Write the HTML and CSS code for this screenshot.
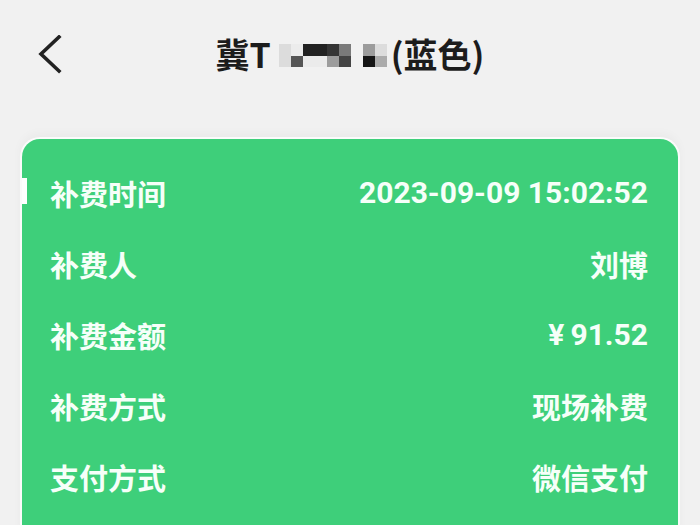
FILE: index.html
```html
<!DOCTYPE html>
<html lang="zh-CN">
<head>
<meta charset="utf-8">
<link rel="stylesheet" href="styles.css">
</head>
<body>
<header class="topbar">
  <span class="back">
    <svg width="24" height="40" viewBox="0 0 24 40"><path d="M21 2 L3 19 L21 36" fill="none" stroke="#222" stroke-width="3.6" stroke-linecap="square" stroke-linejoin="miter"/></svg>
  </span>
  <h1 class="title">冀T<span class="mosaic"><i class="m-ddd"></i><i class="m-f0"></i><i class="m-222"></i><i class="m-222"></i><i class="m-333"></i><i class="m-777"></i><i class="m-f1"></i><i class="m-999"></i><i class="m-ddd"></i><i class="m-ddd"></i><i class="m-555"></i><i class="m-eee"></i><i class="m-eee"></i><i class="m-999"></i><i class="m-444"></i><i class="m-f1"></i><i class="m-111"></i><i class="m-aaa"></i></span>(蓝色)</h1>
</header>
<main class="card">
  <span class="marker"></span>
  <div class="row"><span class="label">补费时间</span><span class="value num">2023-09-09 15:02:52</span></div>
  <div class="row"><span class="label">补费人</span><span class="value">刘博</span></div>
  <div class="row"><span class="label">补费金额</span><span class="value num"><span class="yen">¥</span>91.52</span></div>
  <div class="row"><span class="label">补费方式</span><span class="value">现场补费</span></div>
  <div class="row"><span class="label">支付方式</span><span class="value">微信支付</span></div>
  <div class="row"><span class="label">&nbsp;</span><span class="value"></span></div>
</main>
</body>
</html>
```
FILE: styles.css
```css
* { box-sizing: border-box; }
html, body { margin: 0; padding: 0; }
body {
  background: #f1f1f1;
  font-family: "Noto Sans CJK SC", "Noto Sans", sans-serif;
  width: 700px;
  height: 525px;
  overflow: hidden;
}
.topbar {
  position: relative;
  height: 137px;
  display: flex;
  justify-content: center;
  padding-top: 32px;
}
.back {
  position: absolute;
  left: 38px;
  top: 35px;
  width: 24px;
  height: 40px;
}
.back svg { display: block; }
.title {
  margin: 0;
  font-size: 34px;
  font-weight: 700;
  color: #1c1c1c;
  line-height: 44px;
  height: 44px;
  display: flex;
  align-items: center;
  letter-spacing: 0;
}
.title .mosaic {
  display: inline-grid;
  grid-template-columns: repeat(9, 12px);
  grid-template-rows: 12px 11px;
  margin: 2px 4px 0 8px;
}
.mosaic i { display: block; }
.m-ddd { background: #dcdcdc; }
.m-f0 { background: #ececec; }
.m-f1 { background: #f1f1f1; }
.m-eee { background: #ebebeb; }
.m-222 { background: #222; }
.m-333 { background: #353535; }
.m-777 { background: #7a7a7a; }
.m-999 { background: #9c9c9c; }
.m-aaa { background: #ababab; }
.m-555 { background: #555; }
.m-444 { background: #444; }
.m-111 { background: #151515; }
.card {
  position: relative;
  margin: 0 20px;
  height: 400px;
  background: #3ecf7a;
  border: 2px solid #fbfbfb;
  border-bottom: 0;
  border-radius: 20px 20px 0 0;
  padding: 18px 30px 0 28px;
  box-shadow: 0 -4px 10px rgba(0,0,0,0.03);
}
.marker {
  position: absolute;
  left: 0;
  top: 39px;
  width: 5px;
  height: 26px;
  background: #fff;
}
.row {
  height: 71px;
  display: flex;
  justify-content: space-between;
  align-items: center;
  color: #f6fff9;
  font-size: 29px;
  font-weight: 700;
}
.value.num {
  font-family: Roboto, "Noto Sans", sans-serif;
  font-size: 30px;
  font-weight: 700;
}
.yen { margin-right: 6px; }
```
